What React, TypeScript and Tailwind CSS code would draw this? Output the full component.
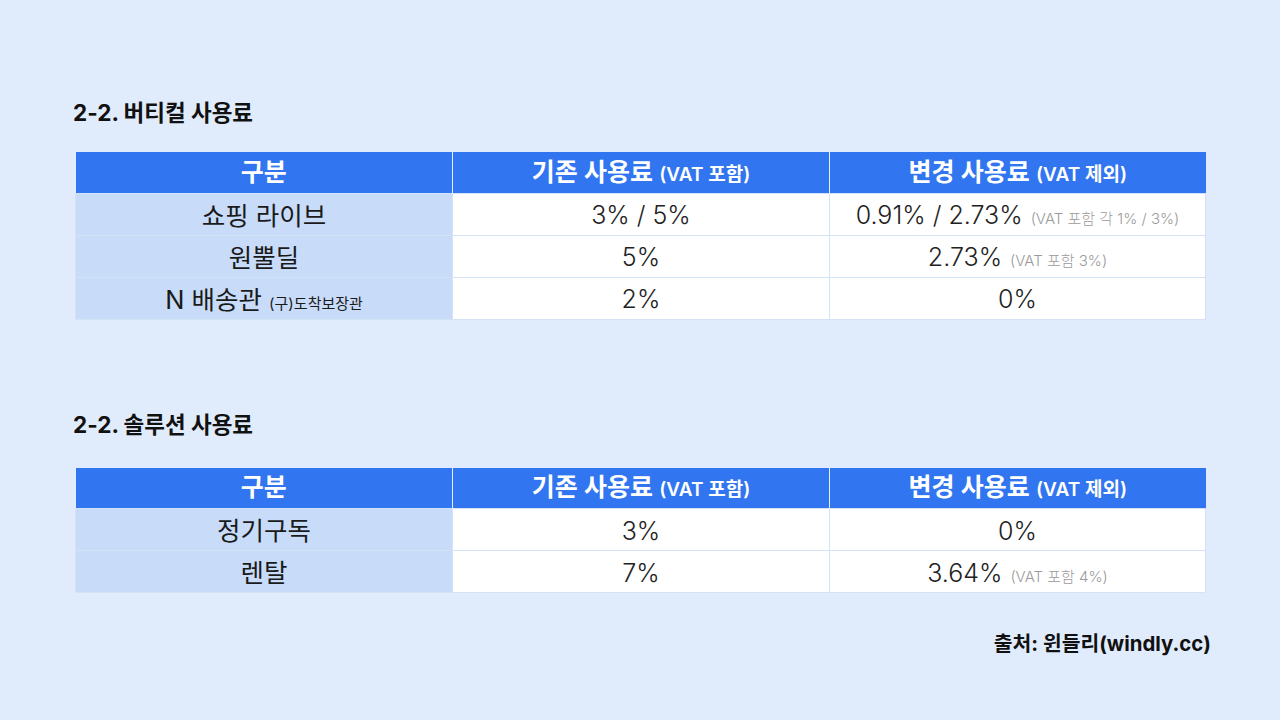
import React from 'react';

const FONT = "font-['Inter','Noto_Sans_CJK_KR',sans-serif]";

type Row = { label: React.ReactNode; before: string; after: React.ReactNode };

const Note = ({ children }: { children: React.ReactNode }) => (
  <span className="ml-2 text-[15px] font-light text-[#9a9a9a]">{children}</span>
);

const FeeTable = ({ rows }: { rows: Row[] }) => (
  <table className="w-[1131px] table-fixed border-collapse leading-none">
    <thead>
      <tr className="h-[41px] bg-[#3176f0] text-white">
        <th className="w-[377px] border-r border-[#e6efff] text-[25px] font-semibold">구분</th>
        <th className="w-[377px] border-r border-[#e6efff] text-[25px] font-semibold">
          기존 사용료 <span className="text-[19px]">(VAT 포함)</span>
        </th>
        <th className="text-[25px] font-semibold">
          변경 사용료 <span className="text-[19px]">(VAT 제외)</span>
        </th>
      </tr>
    </thead>
    <tbody>
      {rows.map((r, i) => (
        <tr key={i} className="h-[42px]">
          <td className="border border-[#d3e2f7] bg-[#c8dcfa] pt-[3px] text-center text-[25.5px] text-[#1a1a1a]">{r.label}</td>
          <td className="border border-[#d3e2f7] bg-white pt-[3px] text-center text-[25px] font-light text-[#222]">{r.before}</td>
          <td className="border border-[#d3e2f7] bg-white pt-[3px] text-center text-[25px] font-light text-[#222]">{r.after}</td>
        </tr>
      ))}
    </tbody>
  </table>
);

export default function App() {
  const vertical: Row[] = [
    { label: '쇼핑 라이브', before: '3% / 5%', after: <>0.91% / 2.73%<Note>(VAT 포함 각 1% / 3%)</Note></> },
    { label: '원뿔딜', before: '5%', after: <>2.73%<Note>(VAT 포함 3%)</Note></> },
    {
      label: <>N 배송관 <span className="text-[15px]">(구)도착보장관</span></>,
      before: '2%',
      after: '0%',
    },
  ];
  const solution: Row[] = [
    { label: '정기구독', before: '3%', after: '0%' },
    { label: '렌탈', before: '7%', after: <>3.64%<Note>(VAT 포함 4%)</Note></> },
  ];

  return (
    <div className={`${FONT} h-[720px] w-[1280px] bg-[#e0ecfc] pl-[75px] pt-[100px] text-[#111]`}>
      <h2 className="ml-[-2px] text-[22.5px] font-bold leading-[26px]">2-2. 버티컬 사용료</h2>
      <div className="mt-[26px]">
        <FeeTable rows={vertical} />
      </div>
      <h2 className="ml-[-2px] mt-[92px] text-[22.5px] font-bold leading-[26px]">2-2. 솔루션 사용료</h2>
      <div className="mt-[30px]">
        <FeeTable rows={solution} />
      </div>
      <div className="mr-[69px] mt-[36px] text-right text-[20.4px] font-bold">출처: 윈들리(windly.cc)</div>
    </div>
  );
}
